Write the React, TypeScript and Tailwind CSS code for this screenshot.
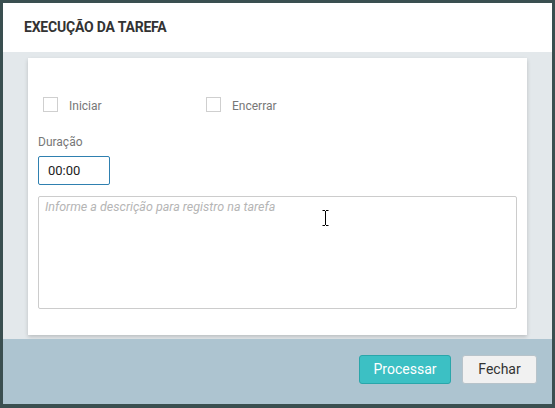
export default function App() {
  return (
    <div className="relative w-[555px] h-[408px] overflow-hidden bg-[#3a4f50] pt-[3px] pl-[3px]" style={{ fontFamily: 'Roboto, "Liberation Sans", Arial, sans-serif' }}>
      <div className="w-[549px] h-[401px] flex flex-col bg-white">
        <div className="h-[49px] shrink-0 bg-white flex items-center pl-[21px]">
          <h1 className="text-[14px] font-bold text-[#333] tracking-[-0.2px]">EXECUÇÃO DA TAREFA</h1>
        </div>
        <div className="flex-1 bg-[#e3e8eb] pt-[6px] pl-[25px]">
          <div className="w-[499px] h-[277px] bg-white shadow-[0_2px_4px_rgba(0,0,0,0.18)] px-[10px] pt-[39px]">
            <div className="flex items-center pl-[5px] h-[15px]">
              <label className="flex items-center w-[163px]">
                <span className="w-[15px] h-[15px] border border-[#cfcfcf] bg-white"></span>
                <span className="ml-[11px] text-[12px] leading-[15px] pt-[3px] text-[#777]">Iniciar</span>
              </label>
              <label className="flex items-center">
                <span className="w-[15px] h-[15px] border border-[#cfcfcf] bg-white"></span>
                <span className="ml-[11px] text-[12px] leading-[15px] pt-[3px] text-[#777]">Encerrar</span>
              </label>
            </div>
            <div className="mt-[23px] text-[12px] leading-[14px] text-[#777]">Duração</div>
            <div className="mt-[7px] w-[72px] h-[29px] border border-[#2f80b0] rounded-[2px] flex items-center pl-[9px] text-[13px] text-[#222]">00:00</div>
            <div className="relative mt-[11px] h-[113px] border border-[#cccccc] rounded-[2px] pl-[6px] pt-[2px]">
              <div className="text-[12.5px] leading-[15px] italic text-[#b5b5b5]">Informe a descrição para registro na tarefa</div>
              <svg className="absolute left-[283px] top-[13px]" width="7" height="16" viewBox="0 0 7 16">
                <path d="M0.5 0.5h2.5M4 0.5h2.5M3.5 1v14M0.5 15.5h2.5M4 15.5h2.5" stroke="#000" strokeWidth="1" fill="none" />
              </svg>
            </div>
          </div>
        </div>
        <div className="h-[65px] shrink-0 bg-[#adc4d0] flex items-start justify-end gap-[11px] pt-[16px] pr-[15px]">
          <button className="w-[92px] h-[29px] rounded-[3px] bg-[#3cc0c4] border border-[#2aa6aa] text-white text-[14px]">Processar</button>
          <button className="w-[75px] h-[29px] rounded-[3px] bg-[#f1f1f1] border border-[#b7c3ca] text-[#333] text-[14px]">Fechar</button>
        </div>
      </div>
    </div>
  );
}
